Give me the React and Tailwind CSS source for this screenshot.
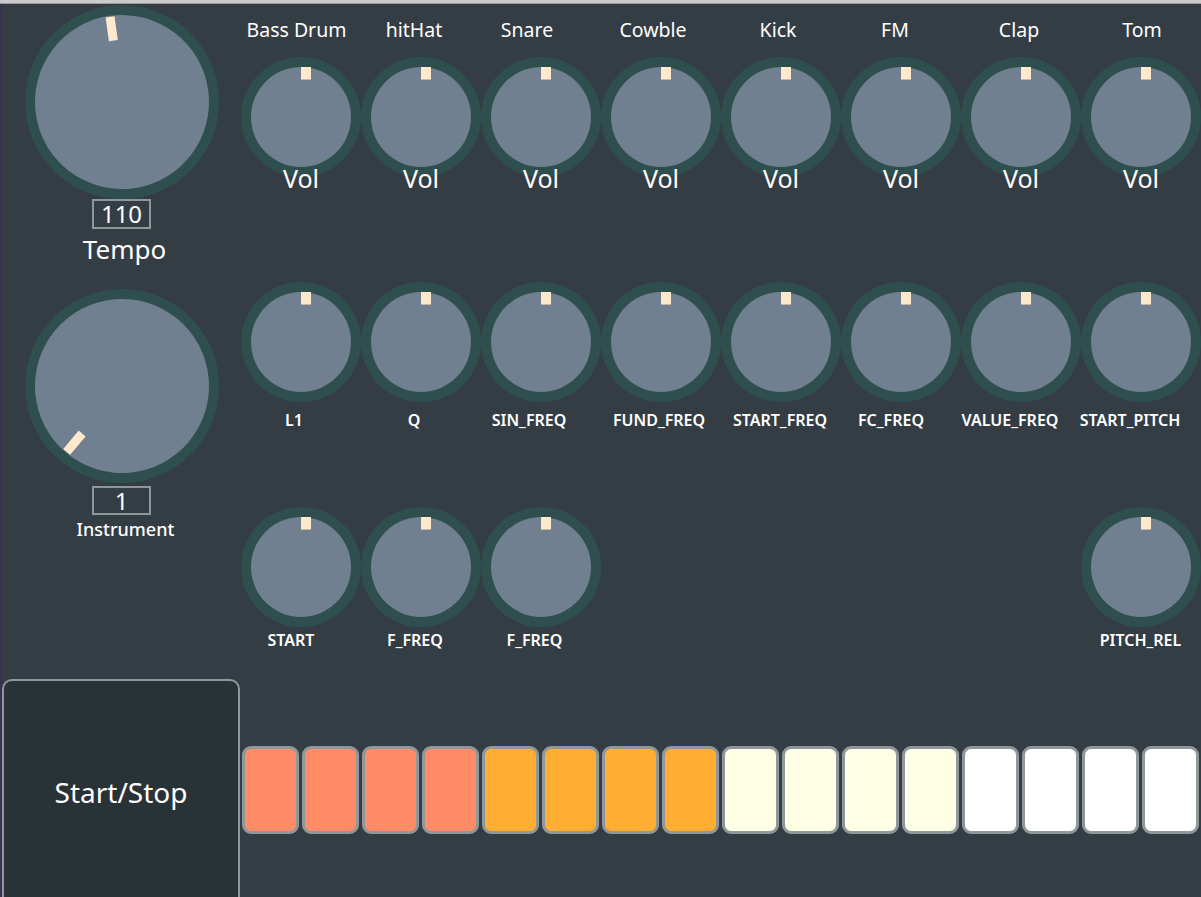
import React from 'react';

const font = { fontFamily: '"Noto Sans", "Open Sans", sans-serif' };

// labels sit a little off the knob centre in the original, so each cell carries its own nudge
const topRow = [
  ['Bass Drum', 'pr-[9px]'],
  ['hitHat', 'pr-[14px]'],
  ['Snare', 'pr-[28px]'],
  ['Cowble', 'pr-[16px]'],
  ['Kick', 'pr-[6px]'],
  ['FM', 'pr-[12px]'],
  ['Clap', 'pr-[4px]'],
  ['Tom', 'pl-[2px]'],
];
const midRow = [
  ['L1', 'pr-[14px]'],
  ['Q', 'pr-[14px]'],
  ['SIN_FREQ', 'pr-[24px]'],
  ['FUND_FREQ', 'pr-[4px]'],
  ['START_FREQ', 'pr-[2px]'],
  ['FC_FREQ', 'pr-[20px]'],
  ['VALUE_FREQ', 'pr-[22px]'],
  ['START_PITCH', 'pr-[22px]'],
];
const lowRow = [
  ['START', 'pr-[20px]'],
  ['F_FREQ', 'pr-[12px]'],
  ['F_FREQ', 'pr-[13px]'],
  null, null, null, null,
  ['PITCH_REL', 'pr-[1px]'],
];

const pads = [
  '#ff8c66', '#ff8c66', '#ff8c66', '#ff8c66',
  '#ffad33', '#ffad33', '#ffad33', '#ffad33',
  '#ffffe6', '#ffffe6', '#ffffe6', '#ffffe6',
  '#ffffff', '#ffffff', '#ffffff', '#ffffff',
];

function SmallKnob() {
  return (
    <div className="w-[120px] h-[120px] rounded-full bg-[#2f4f4f] p-[10px] shrink-0">
      <div className="relative w-full h-full rounded-full bg-[#708090]">
        <div className="absolute left-1/2 top-0 w-[10px] h-[13px] bg-[#ffe8cb] border-b border-[#c9b9a4]" />
      </div>
    </div>
  );
}

function BigKnob({ angle }) {
  return (
    <div className="w-[194px] h-[194px] rounded-full bg-[#2f4f4f] p-[10px] shrink-0">
      <div className="relative w-full h-full rounded-full bg-[#708090]" style={{ transform: `rotate(${angle}deg)` }}>
        <div className="absolute left-1/2 top-[1px] -translate-x-1/2 w-[9px] h-[24px] bg-[#ffe8cb]" />
      </div>
    </div>
  );
}

function ValueBox({ value, h }) {
  return (
    <div className={`w-[59px] ${h} border-2 border-[#8e979a] flex items-center justify-center text-white text-[24px] leading-none`}>
      {value}
    </div>
  );
}

export default function App() {
  return (
    <div className="w-[1201px] h-[897px] overflow-hidden bg-[#343d44] flex flex-col" style={font}>
      <div className="h-[4px] bg-[#cbcbcb] border-b border-[#9c9c9c] shrink-0" />
      <div className="flex-1 flex flex-col border-l-2 border-[#3a3152]">
        <div className="h-[675px] flex shrink-0">
          {/* left column: tempo + instrument */}
          <div className="w-[239px] shrink-0 flex flex-col items-center">
            <div className="mt-[1px]"><BigKnob angle={-8} /></div>
            <ValueBox value="110" h="h-[30px]" />
            <div className="mt-[5px] pl-[6px] text-white text-[26px] leading-[30px]">Tempo</div>
            <div className="mt-[25px]"><BigKnob angle={-140} /></div>
            <div className="mt-[3px]"><ValueBox value="1" h="h-[29px]" /></div>
            <div className="mt-[2px] pl-[8px] text-white text-[18px] font-medium leading-[24px]">Instrument</div>
          </div>

          {/* right: knob grid */}
          <div className="flex flex-col">
            <div className="flex pt-[14px]">
              {topRow.map(([name, nudge], i) => (
                <div key={i} className="w-[120px] shrink-0 flex flex-col items-center">
                  <div className={`${nudge} text-white text-[19.5px] leading-[24px] whitespace-nowrap`}>{name}</div>
                  <div className="mt-[15px]"><SmallKnob /></div>
                  <div className="-mt-[14px] relative text-white text-[25px] leading-[30px]">Vol</div>
                </div>
              ))}
            </div>
            <div className="flex mt-[89px]">
              {midRow.map(([name, nudge], i) => (
                <div key={i} className="w-[120px] shrink-0 flex flex-col items-center">
                  <SmallKnob />
                  <div className={`${nudge} mt-[8px] text-white text-[16px] font-semibold leading-[20px] whitespace-nowrap`}>{name}</div>
                </div>
              ))}
            </div>
            <div className="flex mt-[77px]">
              {lowRow.map((item, i) => (
                <div key={i} className="w-[120px] h-[143px] shrink-0 flex flex-col items-center">
                  {item && (
                    <>
                      <SmallKnob />
                      <div className={`${item[1]} mt-[3px] text-white text-[16px] font-semibold leading-[20px] whitespace-nowrap`}>{item[0]}</div>
                    </>
                  )}
                </div>
              ))}
            </div>
          </div>
        </div>

        {/* bottom: start/stop + sequencer pads */}
        <div className="flex flex-1 items-start">
          <button className="w-[238px] h-[240px] shrink-0 bg-[#293237] border-2 border-[#8e979a] rounded-[10px] flex items-center justify-center text-white text-[28px]">
            <span className="-mt-[14px]">Start/Stop</span>
          </button>
          <div className="flex gap-[3px] ml-[2px] mt-[67px]">
            {pads.map((c, i) => (
              <div key={i} className="w-[57px] h-[88px] shrink-0 border-[3px] border-[#8e979a] rounded-[9px]" style={{ backgroundColor: c }} />
            ))}
          </div>
        </div>
      </div>
    </div>
  );
}
